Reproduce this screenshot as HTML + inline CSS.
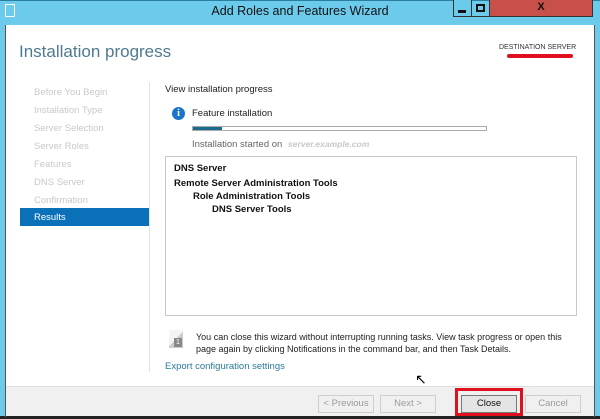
<!DOCTYPE html>
<html><head><style>
*{margin:0;padding:0;box-sizing:border-box}
body{width:600px;height:419px;background:#6ccbeb;font-family:"Liberation Sans",sans-serif;position:relative;overflow:hidden}
.a{position:absolute}
.nav{position:absolute;left:34px;font-size:9.5px;color:#c8c8c8}
.t{font-size:9.5px;color:#222}
.btn{position:absolute;top:395px;height:18px;border:1px solid #cfcfcf;background:#f0f0f0;font-size:9.5px;color:#9a9a9a;text-align:center;line-height:16px}
</style></head><body>
<div class="a" style="left:0;top:0;width:600px;height:1px;background:#2a7ea0"></div>
<div class="a" style="left:5px;top:4px;width:10px;height:13px;border:1.5px solid #fff;border-radius:1px"></div>
<div class="a" style="left:0;top:4px;width:600px;text-align:center;font-size:12.5px;color:#111">Add Roles and Features Wizard</div>
<div class="a" style="left:453px;top:0;width:19px;height:17px;background:#6ccbeb;border:1px solid #333;border-top:none"></div>
<div class="a" style="left:458px;top:10px;width:8px;height:3px;background:#111"></div>
<div class="a" style="left:471px;top:0;width:19px;height:17px;border:1px solid #333;border-top:none"></div>
<div class="a" style="left:476px;top:4px;width:9px;height:8px;border:2px solid #111"></div>
<div class="a" style="left:489px;top:0;width:104px;height:17px;background:#c7504a;border:1px solid #333;border-top:none;color:#111;font-size:11px;font-weight:bold;text-align:center;line-height:14px">X</div>
<div class="a" style="left:6px;top:25px;width:588px;height:361px;background:#fff"></div>
<div class="a" style="left:6px;top:386px;width:588px;height:30px;background:#f0f0f0;border-top:1px solid #dedede"></div>
<div class="a" style="left:0;top:416px;width:600px;height:3px;background:#222"></div>
<div class="a" style="left:5px;top:25px;width:1px;height:392px;background:#555"></div>
<div class="a" style="left:594px;top:25px;width:1px;height:392px;background:#555"></div>
<div class="a" style="left:19px;top:42px;font-size:17px;color:#4f7a90">Installation progress</div>
<div class="a" style="left:499px;top:44px;font-size:7px;color:#333">DESTINATION SERVER</div>
<div class="a" style="left:507px;top:54px;width:66px;height:4px;background:#e01020;border-radius:2px"></div>
<div class="nav" style="top:87px">Before You Begin</div>
<div class="nav" style="top:105px">Installation Type</div>
<div class="nav" style="top:123px">Server Selection</div>
<div class="nav" style="top:141px">Server Roles</div>
<div class="nav" style="top:159px">Features</div>
<div class="nav" style="top:177px">DNS Server</div>
<div class="nav" style="top:195px">Confirmation</div>
<div class="a" style="left:20px;top:208px;width:129px;height:18px;background:#0a70b8"></div>
<div class="nav" style="top:212px;color:#fff">Results</div>
<div class="a" style="left:149px;top:82px;width:1px;height:290px;background:#e2e2e2"></div>
<div class="a t" style="left:165px;top:84px">View installation progress</div>
<div class="a" style="left:172px;top:107px;width:13px;height:13px;border-radius:50%;background:#1a75c8;color:#fff;font-size:10px;font-weight:bold;text-align:center;line-height:13px;font-family:'Liberation Serif',serif">i</div>
<div class="a t" style="left:192px;top:108px">Feature installation</div>
<div class="a" style="left:192px;top:126px;width:295px;height:5px;border:1px solid #aaa"></div>
<div class="a" style="left:193px;top:127px;width:29px;height:3px;background:#1a6c8e"></div>
<div class="a t" style="left:192px;top:139px;color:#666">Installation started on</div>
<div class="a" style="left:288px;top:139px;font-size:8.5px;color:#c8c8c8;font-style:italic;font-weight:bold">server.example.com</div>
<div class="a" style="left:165px;top:156px;width:412px;height:160px;border:1px solid #c8c8c8"></div>
<div class="a t" style="left:174px;top:163px;font-weight:bold;color:#111">DNS Server</div>
<div class="a t" style="left:174px;top:178px;font-weight:bold;color:#111">Remote Server Administration Tools</div>
<div class="a t" style="left:193px;top:191px;font-weight:bold;color:#111">Role Administration Tools</div>
<div class="a t" style="left:212px;top:204px;font-weight:bold;color:#111">DNS Server Tools</div>
<div class="a" style="left:169px;top:330px;width:14px;height:18px;background:linear-gradient(135deg,#f4f4f4 50%,#ccc 50%)"></div>
<div class="a" style="left:174px;top:338px;width:8px;height:9px;background:#888;color:#fff;font-size:7px;text-align:center;line-height:9px">1</div>
<div class="a t" style="left:196px;top:331px;line-height:12px;width:380px;font-size:9px">You can close this wizard without interrupting running tasks. View task progress or open this page again by clicking Notifications in the command bar, and then Task Details.</div>
<div class="a" style="left:165px;top:361px;font-size:9.5px;color:#2a7a9a">Export configuration settings</div>
<div class="a" style="left:415px;top:371px;font-size:14px;color:#000">&#x2196;</div>
<div class="btn" style="left:318px;width:56px">&lt; Previous</div>
<div class="btn" style="left:380px;width:56px">Next &gt;</div>
<div class="a" style="left:455px;top:388px;width:68px;height:28px;border:3px solid #e0101c"></div>
<div class="btn" style="left:461px;width:56px;border-color:#777;background:#e4e4e4;color:#111">Close</div>
<div class="btn" style="left:525px;width:56px">Cancel</div>
</body></html>
